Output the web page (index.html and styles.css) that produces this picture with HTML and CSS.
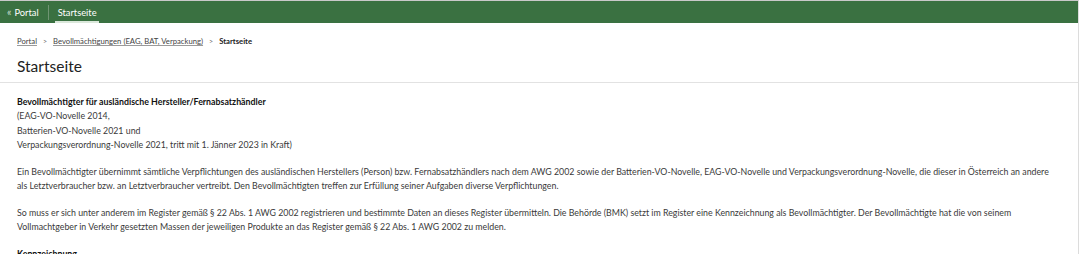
FILE: index.html
```html
<!DOCTYPE html>
<html lang="de">
<head>
<meta charset="utf-8">
<title>Startseite</title>
<link rel="stylesheet" href="styles.css">
</head>
<body>
<div class="frame">
  <nav class="topbar">
    <a class="back" href="#"><span class="chev">«</span> Portal</a>
    <span class="sep"></span>
    <a class="tab active" href="#">Startseite</a>
  </nav>
  <div class="crumbs">
    <a href="#">Portal</a>
    <span class="gt">&gt;</span>
    <a href="#">Bevollmächtigungen (EAG, BAT, Verpackung)</a>
    <span class="gt">&gt;</span>
    <span class="cur">Startseite</span>
  </div>
  <h1 class="title">Startseite</h1>
  <main class="content">
    <p class="intro"><strong>Bevollmächtigter für ausländische Hersteller/Fernabsatzhändler</strong><br>(EAG-VO-Novelle 2014,<br>Batterien-VO-Novelle 2021 und<br>Verpackungsverordnung-Novelle 2021, tritt mit 1. Jänner 2023 in Kraft)</p>
    <p>Ein Bevollmächtigter übernimmt sämtliche Verpflichtungen des ausländischen Herstellers (Person) bzw. Fernabsatzhändlers nach dem AWG 2002 sowie der Batterien-VO-Novelle, EAG-VO-Novelle und Verpackungsverordnung-Novelle, die dieser in Österreich an andere als Letztverbraucher bzw. an Letztverbraucher vertreibt. Den Bevollmächtigten treffen zur Erfüllung seiner Aufgaben diverse Verpflichtungen.</p>
    <p>So muss er sich unter anderem im Register gemäß § 22 Abs. 1 AWG 2002 registrieren und bestimmte Daten an dieses Register übermitteln. Die Behörde (BMK) setzt im Register eine Kennzeichnung als Bevollmächtigter. Der Bevollmächtigte hat die von seinem Vollmachtgeber in Verkehr gesetzten Massen der jeweiligen Produkte an das Register gemäß § 22 Abs. 1 AWG 2002 zu melden.</p>
    <p class="bold">Kennzeichnung</p>
  </main>
</div>
</body>
</html>
```

FILE: styles.css
```css
html, body {
  margin: 0;
  padding: 0;
  background: #fff;
}
body {
  font-family: "Lato", "Liberation Sans", sans-serif;
  color: #3a3a3a;
  overflow: hidden;
}
.frame {
  width: 1079px;
  height: 254px;
  border-top: 1px solid #c9c9c9;
  border-right: 1px solid #dcdcdc;
  box-sizing: border-box;
  overflow: hidden;
}
.topbar {
  height: 22px;
  background: #3a7141;
  display: flex;
  align-items: stretch;
  font-size: 9.3px;
}
.topbar a {
  color: #fff;
  text-decoration: none;
  display: flex;
  align-items: center;
}
.back {
  padding: 0 0 0 7px;
  color: #eef4ee;
}
.chev {
  margin-right: 3px;
  color: #c9dcc9;
  font-size: 10.5px;
}
.sep {
  width: 1px;
  background: #6f9573;
  margin: 4px 6px 3px 9px;
}
.tab {
  padding: 2px 2px 0 3px;
  box-sizing: border-box;
  border-bottom: 2px solid transparent;
}
.tab.active {
  border-bottom-color: #dbe8db;
}
.crumbs {
  margin: 13px 0 0 17px;
  font-size: 7.7px;
  display: flex;
  gap: 6px;
  align-items: baseline;
  color: #444;
}
.crumbs a {
  color: #444;
  text-decoration: underline;
  text-decoration-color: #9a9a9a;
}
.crumbs .gt {
  font-size: 7px;
  color: #666;
}
.crumbs .cur {
  font-weight: 700;
  color: #222;
}
.title {
  margin: 10px 0 0 17px;
  font-size: 15.5px;
  font-weight: 400;
  color: #222;
  line-height: 20px;
  padding-bottom: 6px;
}
.content {
  border-top: 1px solid #e2e2e2;
  padding: 12px 17px 0 17px;
  font-size: 8.8px;
  line-height: 14.3px;
}
.content p {
  margin: 0 0 12.5px 0;
  max-width: 1036px;
}
.content strong, .bold {
  font-weight: 700;
  color: #111;
}
```
